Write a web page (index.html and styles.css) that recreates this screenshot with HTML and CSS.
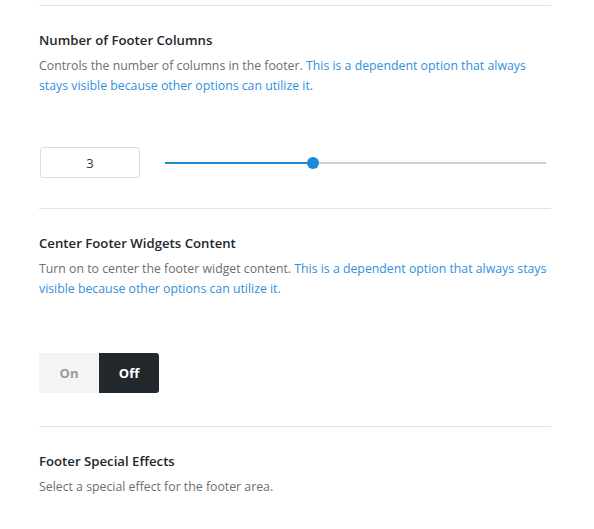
FILE: index.html
```html
<!DOCTYPE html>
<html>
<head>
<meta charset="utf-8">
<link rel="stylesheet" href="styles.css">
</head>
<body>
<div class="panel">
  <section class="option">
    <h3 class="title">Number of Footer Columns</h3>
    <p class="desc">Controls the number of columns in the footer. <span class="dep">This is a dependent option that always stays visible because other options can utilize it.</span></p>
    <div class="control range-row">
      <input class="num" type="text" value="3">
      <div class="slider">
        <div class="track"><div class="fill" style="width:38.8%"></div></div>
        <div class="thumb" style="left:38.8%"></div>
      </div>
    </div>
  </section>
  <section class="option">
    <h3 class="title">Center Footer Widgets Content</h3>
    <p class="desc">Turn on to center the footer widget content. <span class="dep">This is a dependent option that always stays visible because other options can utilize it.</span></p>
    <div class="control toggle">
      <span class="seg">On</span>
      <span class="seg active">Off</span>
    </div>
  </section>
  <section class="option">
    <h3 class="title">Footer Special Effects</h3>
    <p class="desc">Select a special effect for the footer area.</p>
  </section>
</div>
</body>
</html>
```
FILE: styles.css
```css
html, body {
  margin: 0;
  padding: 0;
  background: #fff;
}
body {
  font-family: "Open Sans", "Noto Sans", sans-serif;
  color: #23282d;
}
.panel {
  width: 512px;
  margin-left: 39px;
  padding-top: 5px;
}
.option {
  border-top: 1px solid #e2e2e2;
  padding-top: 24px;
}
.title {
  margin: 0;
  font-size: 13.2px;
  line-height: 20px;
  font-weight: 600;
  color: #23282d;
}
.desc {
  margin: 6px 0 0;
  font-size: 12.3px;
  line-height: 20px;
  color: #6e6e6e;
}
.dep {
  color: #3190dc;
}
.range-row {
  display: flex;
  align-items: center;
  gap: 25px;
  margin-top: 51px;
  padding-bottom: 30px;
  padding-left: 1px;
}
.num {
  box-sizing: border-box;
  width: 100px;
  height: 31px;
  border: 1px solid #dcdcdc;
  border-radius: 3px;
  text-align: center;
  font-family: "Open Sans", sans-serif;
  font-size: 13px;
  color: #333;
  padding: 0;
  outline: none;
}
.slider {
  position: relative;
  width: 381px;
  height: 12px;
  display: flex;
  align-items: center;
}
.track {
  width: 100%;
  height: 2px;
  background: #d0d0d0;
}
.fill {
  height: 2px;
  background: #1a8ad6;
}
.thumb {
  position: absolute;
  top: 0;
  width: 12px;
  height: 12px;
  margin-left: -6px;
  border-radius: 50%;
  background: #1a8ad6;
}
.toggle {
  display: inline-flex;
  margin-top: 54px;
  margin-bottom: 33px;
  border-radius: 3px;
  overflow: hidden;
  vertical-align: top;
}
.seg {
  width: 60px;
  height: 40px;
  display: flex;
  align-items: center;
  justify-content: center;
  font-size: 13px;
  font-weight: 700;
  background: #f4f4f4;
  color: #9a9a9a;
}
.seg.active {
  background: #23282d;
  color: #fff;
}
```
